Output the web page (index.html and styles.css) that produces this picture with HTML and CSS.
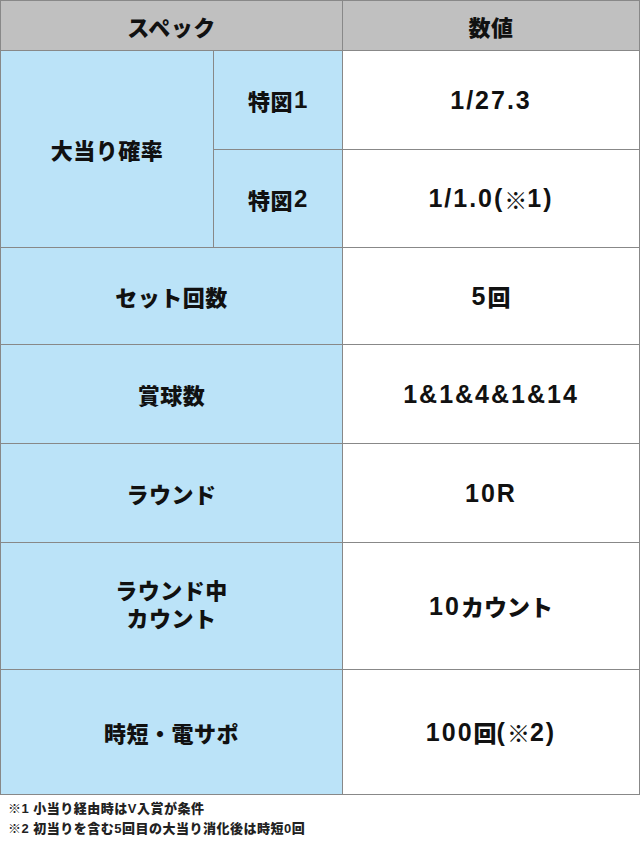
FILE: index.html
```html
<!DOCTYPE html>
<html lang="ja">
<head>
<meta charset="utf-8">
<title>スペック</title>
<link rel="stylesheet" href="styles.css">
</head>
<body>
<div class="spec">
  <div class="cell head span2">スペック</div>
  <div class="cell head">数値</div>

  <div class="cell label rows2">大当り確率</div>
  <div class="cell label">特図<span class="num">1</span></div>
  <div class="cell value">1/27.3</div>
  <div class="cell label">特図<span class="num">2</span></div>
  <div class="cell value">1/1.0(<span class="jp">※</span>1)</div>

  <div class="cell label span2">セット回数</div>
  <div class="cell value">5<span class="jp">回</span></div>

  <div class="cell label span2">賞球数</div>
  <div class="cell value">1&amp;1&amp;4&amp;1&amp;14</div>

  <div class="cell label span2">ラウンド</div>
  <div class="cell value">10R</div>

  <div class="cell label span2 multi">ラウンド中<br>カウント</div>
  <div class="cell value">10<span class="jp">カウント</span></div>

  <div class="cell label span2">時短・電サポ</div>
  <div class="cell value">100<span class="jp">回</span>(<span class="jp">※</span>2)</div>
</div>
<div class="notes">
  <p>※1 小当り経由時はV入賞が条件</p>
  <p>※2 初当りを含む5回目の大当り消化後は時短0回</p>
</div>
</body>
</html>
```

FILE: styles.css
```css
html, body {
  margin: 0;
  padding: 0;
  background: #ffffff;
}

body {
  font-family: "Liberation Sans", "Noto Sans CJK JP", sans-serif;
  color: #111111;
  width: 640px;
}

.spec {
  display: grid;
  grid-template-columns: 212px 128px 296px;
  grid-template-rows: 49px 98px 97px 96px 98px 98px 126px 124px;
  gap: 1px;
  padding: 1px;
  width: 640px;
  box-sizing: border-box;
  background: #888888;
}

.cell {
  display: flex;
  align-items: center;
  justify-content: center;
  text-align: center;
  font-weight: 900;
}

.head {
  background: #c0c0c0;
  font-size: 22px;
  letter-spacing: 0.5px;
}

.label {
  background: #bbe3f8;
  font-size: 22px;
  letter-spacing: 0.5px;
}

.label .num {
  font-size: 24px;
  margin-left: 1px;
}

.value {
  background: #ffffff;
  font-size: 25px;
  letter-spacing: 2px;
}

.value .jp {
  font-size: 23px;
  letter-spacing: 0;
}

.span2 {
  grid-column: span 2;
}

.rows2 {
  grid-row: span 2;
}

.multi {
  line-height: 28px;
}

.notes {
  padding: 4px 0 0 8px;
}

.notes p {
  margin: 0;
  font-size: 13px;
  line-height: 20px;
  font-weight: 900;
  letter-spacing: 0.5px;
  color: #222222;
}
```
